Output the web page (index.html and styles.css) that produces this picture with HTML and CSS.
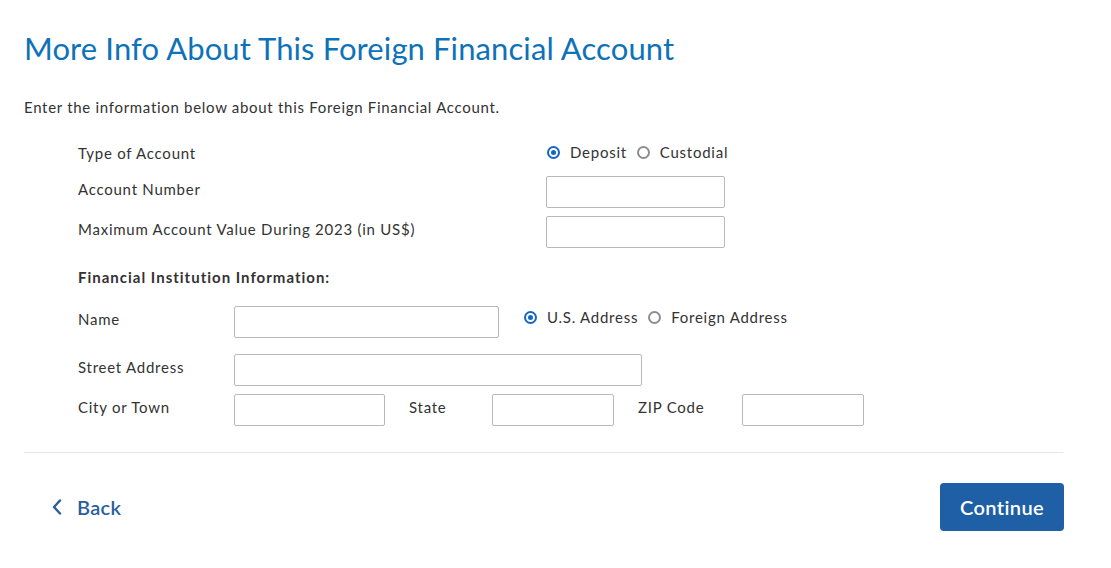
FILE: index.html
```html
<!DOCTYPE html>
<html lang="en">
<head>
<meta charset="utf-8">
<title>More Info About This Foreign Financial Account</title>
<link rel="stylesheet" href="styles.css">
</head>
<body>
<main class="page">
  <h1 class="title">More Info About This Foreign Financial Account</h1>
  <p class="intro">Enter the information below about this Foreign Financial Account.</p>

  <div class="form">
    <div class="row row-type">
      <span class="label wide">Type of Account</span>
      <div class="radios">
        <span class="radio checked"></span><span class="rlabel">Deposit</span>
        <span class="radio"></span><span class="rlabel">Custodial</span>
      </div>
    </div>
    <div class="row row-input">
      <span class="label wide">Account Number</span>
      <span class="input w179"></span>
    </div>
    <div class="row row-input gap8">
      <span class="label wide">Maximum Account Value During 2023 (in US$)</span>
      <span class="input w179"></span>
    </div>

    <h2 class="section">Financial Institution Information:</h2>

    <div class="row row-input name-row">
      <span class="label narrow">Name</span>
      <span class="input w265"></span>
      <div class="radios addr">
        <span class="radio checked"></span><span class="rlabel">U.S. Address</span>
        <span class="radio"></span><span class="rlabel">Foreign Address</span>
      </div>
    </div>
    <div class="row row-input street-row">
      <span class="label narrow">Street Address</span>
      <span class="input w408"></span>
    </div>
    <div class="row row-input gap8">
      <span class="label narrow">City or Town</span>
      <span class="input w151"></span>
      <span class="label state">State</span>
      <span class="input w122"></span>
      <span class="label zip">ZIP Code</span>
      <span class="input w122"></span>
    </div>
  </div>

  <hr class="divider">

  <div class="footer">
    <a class="back" href="#">
      <svg class="chev" width="10" height="16" viewBox="0 0 10 16" aria-hidden="true"><path d="M8 1.5 L2 8 L8 14.5" fill="none" stroke="currentColor" stroke-width="2.4" stroke-linecap="round" stroke-linejoin="round"/></svg>
      <span>Back</span>
    </a>
    <button class="continue" type="button">Continue</button>
  </div>
</main>
</body>
</html>
```
FILE: styles.css
```css
* { box-sizing: border-box; }
html, body { margin: 0; padding: 0; background: #fff; }
body {
  font-family: Lato, "Noto Sans", "Liberation Sans", sans-serif;
  color: #333;
}
.page {
  width: 1064px;
  padding: 0 0 0 24px;
}
.title {
  margin: 0;
  padding-top: 29px;
  font-size: 31px;
  line-height: 38px;
  font-weight: 400;
  color: #0e72b9;
  letter-spacing: 0.1px;
}
.intro {
  margin: 29px 0 0;
  font-size: 15px;
  line-height: 22px;
  color: #333;
  letter-spacing: 0.7px;
}
.form {
  padding-left: 54px;
  margin-top: 23px;
}
.row {
  display: flex;
  align-items: flex-start;
}
.row-type { height: 22px; align-items: center; }
.row-input { margin-top: 13px; }
.row-input.gap8 { margin-top: 8px; }
.label {
  font-size: 15px;
  line-height: 22px;
  padding-top: 2px;
  color: #333;
  letter-spacing: 0.75px;
  white-space: nowrap;
}
.label.wide { width: 468px; flex: none; }
.label.narrow { width: 156px; flex: none; }
.label.state { width: 83px; margin-left: 24px; flex: none; }
.label.zip { width: 104px; margin-left: 24px; flex: none; }
.input {
  display: block;
  height: 32px;
  border: 1px solid #b8b8b8;
  border-radius: 2px;
  background: #fff;
  flex: none;
}
.w179 { width: 179px; }
.w265 { width: 265px; }
.w408 { width: 408px; }
.w151 { width: 151px; }
.w122 { width: 122px; }
.radios {
  display: flex;
  align-items: center;
  font-size: 15px;
  line-height: 22px;
  letter-spacing: 0.75px;
}
.radio {
  width: 13px;
  height: 13px;
  border-radius: 50%;
  border: 2px solid #8d8d8d;
  margin-left: 1px;
  flex: none;
  position: relative;
}
.radio.checked { border-color: #1468c4; }
.radio.checked::after {
  content: "";
  position: absolute;
  left: 2px; top: 2px;
  width: 5px; height: 5px;
  border-radius: 50%;
  background: #1468c4;
}
.rlabel { margin-left: 10px; margin-right: 9px; }
.section {
  margin: 18px 0 0;
  font-size: 15px;
  line-height: 22px;
  font-weight: 700;
  color: #333;
  letter-spacing: 1px;
}
.name-row { margin-top: 18px; }
.addr { margin-left: 24px; height: 22px; margin-top: 0; }
.street-row { margin-top: 16px; }
.divider {
  margin: 26px 0 0;
  width: 1039px;
  border: 0;
  border-top: 1px solid #e6e6e6;
  height: 0;
}
.footer {
  width: 1040px;
  display: flex;
  align-items: center;
  justify-content: space-between;
  margin-top: 30px;
}
.back {
  display: flex;
  align-items: center;
  gap: 15px;
  padding-left: 28px;
  color: #2a5f9c;
  text-decoration: none;
  font-size: 20px;
  font-weight: 600;
  letter-spacing: 0.3px;
}
.chev { display: block; }
.continue {
  width: 124px;
  height: 48px;
  border: 0;
  border-radius: 4px;
  background: #1e5fa6;
  color: #fff;
  font-family: inherit;
  font-size: 20px;
  font-weight: 600;
  letter-spacing: 0.4px;
  padding: 0;
}
```
